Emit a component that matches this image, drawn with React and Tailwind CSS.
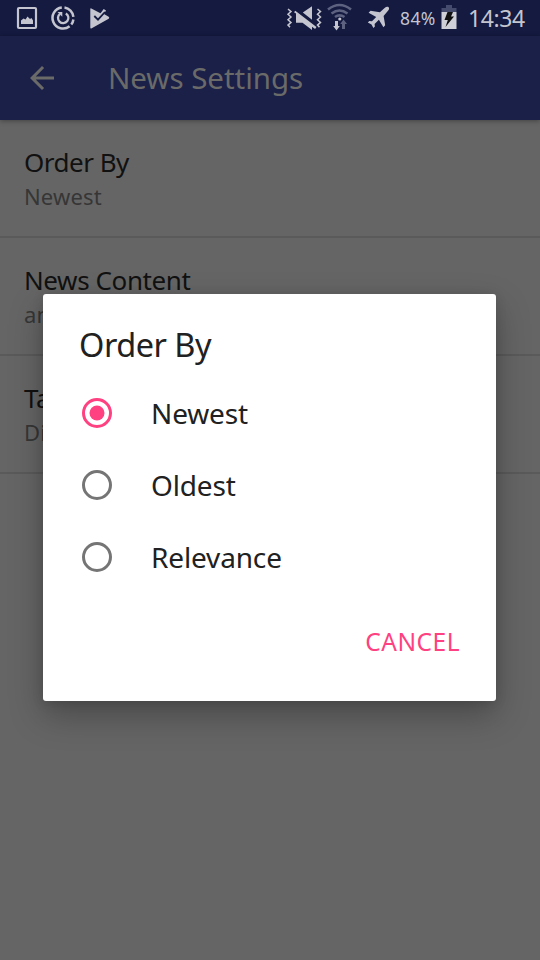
import React from "react";

const settings = [
  { title: "Order By", summary: "Newest", titleTracking: "tracking-[-0.5px]" },
  { title: "News Content", summary: "any", titleTracking: "tracking-[-0.4px]" },
  { title: "Tags", summary: "Disabled", titleTracking: "tracking-[-0.4px]" },
];

const options = [
  { label: "Newest", checked: true },
  { label: "Oldest", checked: false },
  { label: "Relevance", checked: false },
];

function StatusBar() {
  return (
    <header className="flex h-9 shrink-0 items-center bg-[#141a40] text-[#c4c5cf]">
      <svg width="120" height="36" viewBox="0 0 120 36" fill="none">
        <rect x="18" y="8" width="18" height="20" rx="1" stroke="currentColor" strokeWidth="2.200" />
        <path d="M21 24v-3.500l2.500-2 2 1 2-3 2.500 2.500 1.500-1 1.500 2.500V24z" fill="currentColor" />
        <path d="M64.500 7.600a10.500 10.500 0 0 1 8.900 9.200M73.400 19.500a10.500 10.500 0 0 1-2.100 5M69.600 26.200a10.500 10.500 0 1 1-7.800-18.600" stroke="currentColor" strokeWidth="2.500" />
        <path d="M65.800 13.400a5.200 5.200 0 1 1-5.800.4" stroke="currentColor" strokeWidth="2.300" />
        <path d="M57.500 12h4.800v4.800z" fill="currentColor" />
        <path d="M90.300 9.200q0-1.200 1-.7l7.700 4 1.500.8 3.200-4.300 2.300 1.500-2 3.400 4.700 2.900q1.200 1 0 2l-17.400 9.600q-1 .3-1-.8z" fill="currentColor" />
        <path d="m94.300 16 3.700 3.700 7-7.700" stroke="#141a40" strokeWidth="1.800" />
      </svg>
      <svg className="ml-[160px]" width="120" height="36" viewBox="280 0 120 36" fill="none">
        <path d="m288 9 3 2.600-3 2.700 3 2.700-3 2.700 3 2.700-3 2.700 2 2M317.500 9l3 2.600-3 2.700 3 2.700-3 2.700 3 2.700-3 2.700 2 2" stroke="currentColor" strokeWidth="1.500" />
        <path d="M302.800 12.600 312 6.200v13.600zM294 12.200l1.300-1.500L316.500 27l-1.400 2-3.100-2.300V30l-9.500-7.200H296v-9.200z" fill="currentColor" />
        <path d="M328 9.500q11.500-9 23 0M331.500 13.500q8-6 16 0M335 17q4.500-3.200 9.500 0" stroke="#5d6280" strokeWidth="2.600" />
        <circle cx="339.800" cy="19" r="1.600" fill="currentColor" />
        <path d="M335 21h3v5h1.800l-3.300 4.500-3.300-4.500h1.800z" fill="currentColor" />
        <path d="M342 29h3v-5h2l-3.500-4.500-3.300 4.500h1.800z" fill="#5d6280" />
        <path d="M388.600 7.300c.9 1 .5 2.200-.8 3.700l-4.200 5 1.600 9.200-1.800 2-4.500-7.400-4.300 4.200.3 2.600-1.500 1.500-1.900-3.700-3.700-1.800 1.500-1.500 2.700.2 4.200-4.300-7.600-4.300 1.900-1.900 9.400 1.500 4.700-4.200c1.400-1.200 3-1.700 4-.8z" fill="currentColor" />
      </svg>
      <span className="w-[37px] whitespace-nowrap text-[17.500px] leading-9 tracking-[0.4px]">84%</span>
      <svg className="ml-1" width="16" height="36" viewBox="0 0 16 36">
        <path d="M5 5h6v3h4.500v4H.5V8H5z" fill="#454b6c" />
        <path d="M.5 12h15v17H.5z" fill="#d0d0d8" />
        <path d="M6.500 12H12l-2 4.500h3L4.500 27 6.800 20H3.500z" fill="#111111" />
      </svg>
      <span className="ml-[11px] whitespace-nowrap text-[23px] leading-9 tracking-[-0.4px]">14:34</span>
    </header>
  );
}

function SettingsScreen() {
  return (
    <div className="flex h-[960px] flex-col bg-[#656565]">
      <StatusBar />
      <div className="z-10 flex h-[84px] shrink-0 items-center bg-[#1a2048] pl-6 text-[#6a6a68] shadow-[0_1px_5px_rgba(0,0,0,0.35)]">
        <svg width="36" height="36" viewBox="0 0 24 24" fill="currentColor">
          <path d="M20 11H7.830l5.590-5.590L12 4l-8 8 8 8 1.410-1.410L7.830 13H20v-2z" />
        </svg>
        <h1 className="ml-12 whitespace-nowrap text-[29.500px] leading-[84px] tracking-[-0.05px]">News Settings</h1>
      </div>
      <ul>
        {settings.map((item) => (
          <li key={item.title} className="h-[118px] border-b-2 border-[#5a5a5a] px-6 pt-6">
            <div className={"text-[26px] leading-9 text-[#111111] " + item.titleTracking}>{item.title}</div>
            <div className="text-[22px] leading-8 tracking-[0.15px] text-[#363636]">{item.summary}</div>
          </li>
        ))}
      </ul>
    </div>
  );
}

function Radio({ checked }) {
  return (
    <svg width="36" height="36" viewBox="0 0 36 36" fill="none" className={checked ? "text-[#ff4081]" : "text-[#757575]"}>
      <circle cx="18" cy="18" r="13.500" stroke="currentColor" strokeWidth="3" />
      {checked && <circle cx="18" cy="18" r="7.500" fill="currentColor" />}
    </svg>
  );
}

function OrderDialog() {
  return (
    <div role="dialog" className="absolute left-[43px] top-[294px] flex h-[407px] w-[453px] flex-col rounded-[3px] bg-white text-[#212121] shadow-[0_14px_34px_rgba(0,0,0,0.28),0_2px_12px_rgba(0,0,0,0.12)]">
      <h2 className="px-9 pt-[27px] text-[32.500px] leading-[48px] tracking-[-0.5px]">Order By</h2>
      <div className="mt-2">
        {options.map((option) => (
          <div key={option.label} className="flex h-[72px] items-center gap-9 pl-9">
            <Radio checked={option.checked} />
            <span className="text-[28px] leading-9 tracking-[-0.15px]">{option.label}</span>
          </div>
        ))}
      </div>
      <div className="mt-[31px] flex justify-end pr-9">
        <button className="text-[24.500px] leading-9 tracking-[0.5px] text-[#ff4081]">CANCEL</button>
      </div>
    </div>
  );
}

export default function App() {
  return (
    <main className="relative h-[960px] w-[540px] overflow-hidden font-['Noto_Sans',sans-serif]">
      <SettingsScreen />
      <OrderDialog />
    </main>
  );
}
